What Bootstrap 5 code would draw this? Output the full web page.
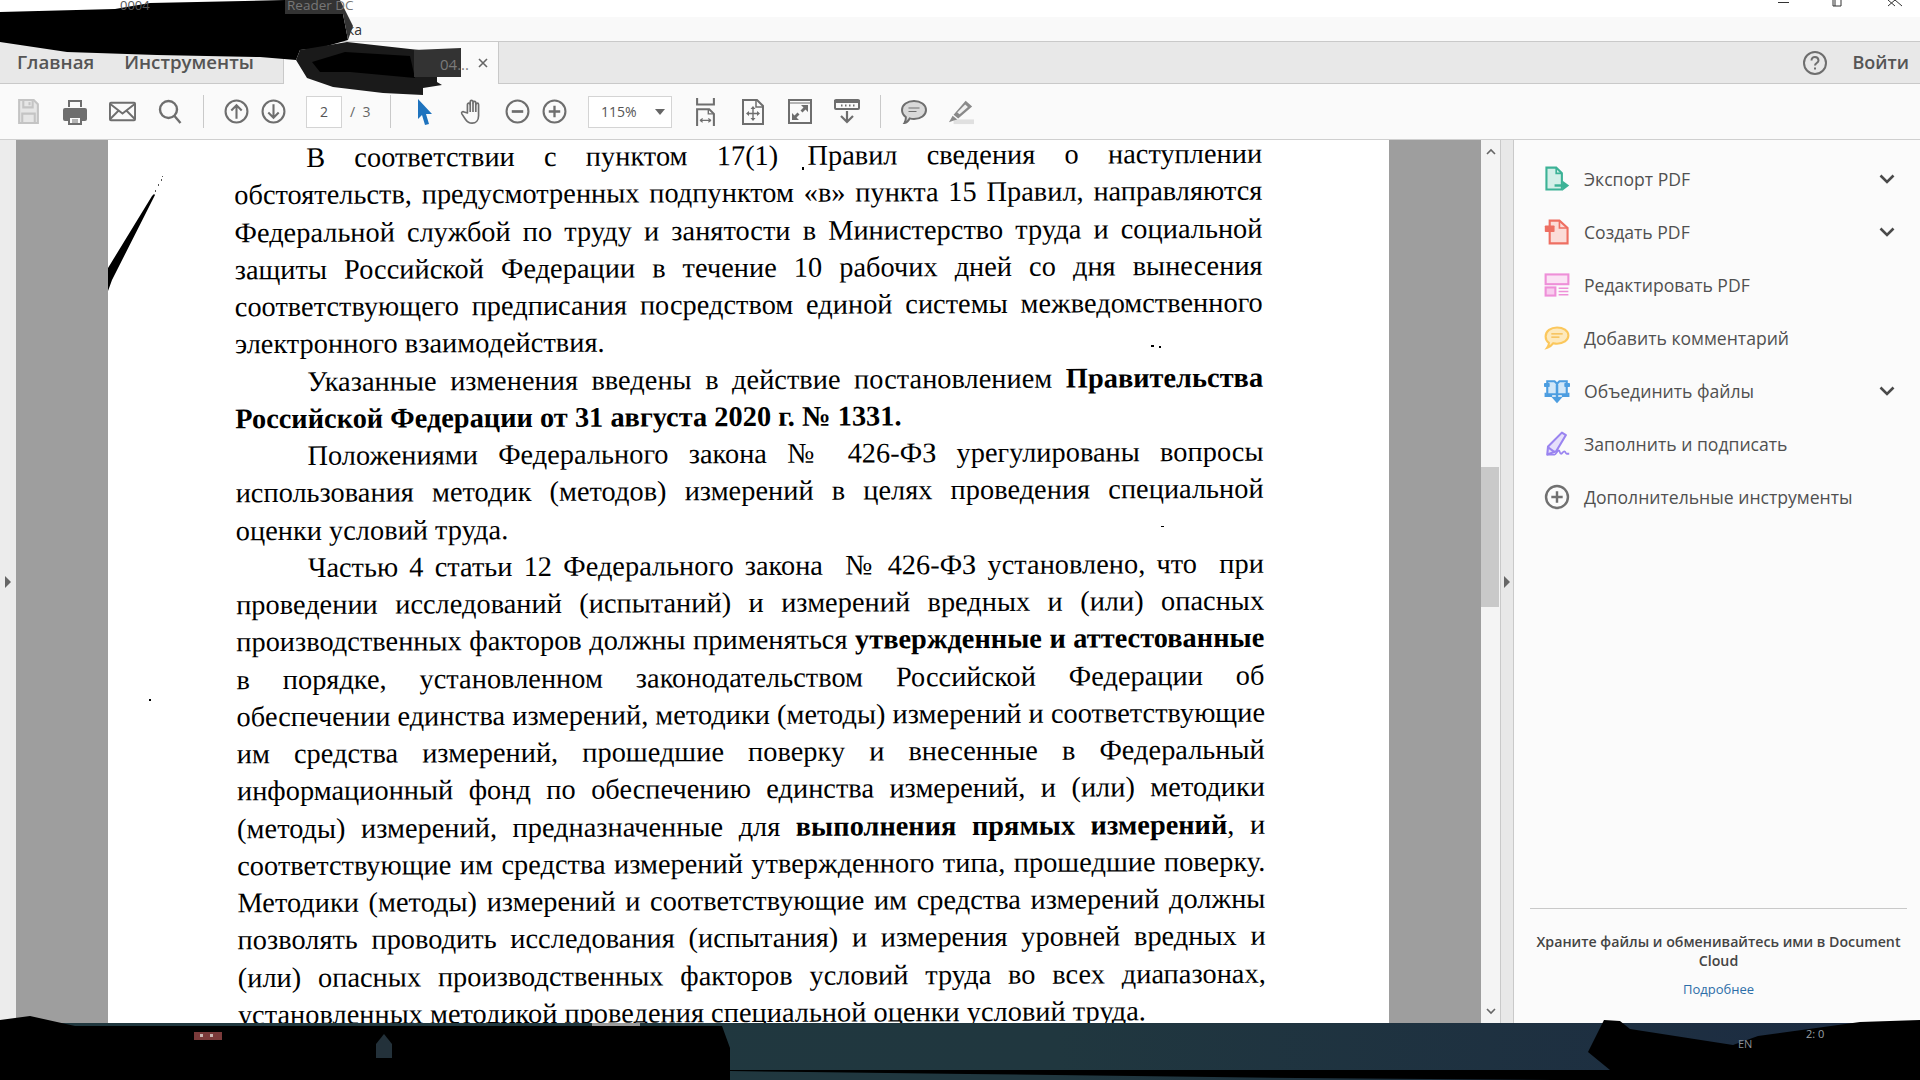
<!DOCTYPE html>
<html lang="ru">
<head>
  <meta charset="UTF-8">
  <title>Adobe Acrobat Reader DC</title>
  <link href="https://cdn.jsdelivr.net/npm/bootstrap@5.3.0/dist/css/bootstrap.min.css" rel="stylesheet">
  <style>
    html, body { height: 100%; }
    body { font-family: "Open Sans", "Liberation Sans", sans-serif; overflow: hidden; background: #fff; }
    .app { height: 1080px; position: relative; overflow: hidden; }
    .title-strip { height: 17px; background: #fff; }
    .win-btns { position: absolute; top: 0; right: 0; }
    .menu-strip { height: 24px; background: #f9f9f9; color: #333; font-size: 14px; line-height: 26px; padding-left: 347px; }
    .tab-row { height: 43px; background: #e8e8e8; border-top: 1px solid #c9c9c9; border-bottom: 1px solid #c9c9c9; color: #4b4b4b; }
    .tab-link { font-size: 18.7px; font-weight: 600; color: #555; }
    .tab-home { margin-left: 17px; }
    .tab-tools { margin-left: 30px; }
    .doc-tab { width: 216px; height: 42px; background: #fafafa; border-right: 1px solid #c9c9c9; border-left: 1px solid #c9c9c9; margin-left: 29px; margin-bottom: -1px; padding-right: 10px; }
    .login-link { font-size: 18px; margin: 0 11px 0 25px; }
    .tool-row { height: 56px; background: #fafafa; border-bottom: 1px solid #cfcfcf; color: #6e6e6e; }
    .tool-sep { width: 1px; height: 33px; background: #c9c9c9; flex: none; }
    .tool-row svg { flex: none; }
    .page-box { width: 36px; height: 32px; background: #fff; border: 1px solid #d4d4d4; font-size: 14px; color: #555; flex: none; }
    .zoom-box { width: 84px; height: 32px; background: #fff; border: 1px solid #d4d4d4; font-size: 14px; color: #555; padding: 0 6px 0 12px; flex: none; }
    .page-of { font-size: 14px; color: #666; width: 19px; white-space: nowrap; flex: none; }
    .m8 { margin-left: 8px; } .m12 { margin-left: 12px; } .m17 { margin-left: 17px; } .m19 { margin-left: 19px; }
    .m20 { margin-left: 20px; } .m21 { margin-left: 21px; } .m22 { margin-left: 22px; } .m23 { margin-left: 23px; }
    .m24 { margin-left: 24px; } .m26 { margin-left: 26px; } .m27 { margin-left: 27px; }
    .main-row { height: 883px; }
    .left-strip { width: 16px; background: #ececec; }
    .doc-view { width: 1465px; background: #9e9e9e; padding: 0 92px; }
    .doc-page { width: 1281px; height: 100%; background: #fff; position: relative; overflow: hidden; }
    .doc-text { padding: 0 125px 0 128px; font-family: "Liberation Serif", serif; font-size: 28.4px; line-height: 37.25px; color: #000; transform: rotate(-0.25deg); transform-origin: 50% 50%; margin-top: -3px; }
    .ln { text-align: justify; text-align-last: justify; white-space: nowrap; }
    .ln.ind { padding-left: 72px; }
    .ln.end { text-align-last: left; }
    .scan-mark { position: absolute; left: 0; top: 0; }
    .v-scroll { width: 19px; background: #f4f4f4; }
    .v-thumb { position: absolute; left: 0; top: 327px; width: 18px; height: 140px; background: #c9c9c9; }
    .mid-strip { width: 14px; background: #e8e8e8; border-left: 1px solid #c9c9c9; border-right: 1px solid #c9c9c9; }
    .side-panel { width: 406px; background: #fbfbfb; padding: 0 13px 0 16px; }
    .side-top { height: 13px; }
    .side-item { height: 52.9px; color: #505050; font-size: 17.6px; padding: 0 12px 0 14px; }
    .side-ico { width: 26px; height: 26px; margin-right: 14px; flex: none; }
    .side-foot { border-top: 1px solid #c9c9c9; text-align: center; font-size: 14.2px; font-weight: 600; line-height: 19px; color: #444; padding-top: 23px; height: 115px; }
    .more-link { display: block; margin-top: 10px; font-size: 13px; font-weight: 400; color: #2d6ea8; text-decoration: none; }
    .task-row { height: 58px; background: linear-gradient(90deg, #20383f, #20373f 55%, #1c2b42); }
    .scribble { position: absolute; left: 0; top: 0; pointer-events: none; font-family: "Open Sans", sans-serif; }
  </style>
</head>
<body>
<div class="app">
  <div class="title-strip">
    <svg class="win-btns" width="160" height="14" viewBox="0 0 160 14" fill="none" stroke="#333" stroke-width="1">
      <path d="M18 2.500h11"/>
      <path d="M73 0v6h8V0M75 6V0"/>
      <path d="M128 0l7 6M135 0l-7 6M135 0l7 6"/>
    </svg>
  </div>
  <div class="menu-strip">ка</div>

  <div class="tab-row d-flex align-items-center">
    <span class="tab-link tab-home">Главная</span>
    <span class="tab-link tab-tools">Инструменты</span>
    <div class="doc-tab d-flex align-items-center justify-content-end align-self-start">
      <svg width="10" height="10" viewBox="0 0 10 10" stroke="#666" stroke-width="1.600"><path d="M1 1l8 8M9 1l-8 8"/></svg>
    </div>
    <div class="ms-auto d-flex align-items-center">
      <svg width="26" height="26" viewBox="0 0 26 26" fill="none" stroke="#6e6e6e" stroke-width="2">
        <circle cx="13" cy="13" r="11"/>
        <path d="M9.500 10.500c0-5 7-4.500 7 0 0 2.500-3.500 2.500-3.500 5"/>
        <path d="M13 17.500v2"/>
      </svg>
      <span class="tab-link login-link">Войти</span>
    </div>
  </div>

  <div class="tool-row d-flex align-items-center">
    <svg class="m17" width="23" height="25" viewBox="0 0 20 24" fill="#e6e6e6" stroke="#c4c4c4" stroke-width="2"><path d="M1 1h14l4 4v18H1z"/><path fill="none" d="M5 1v7h9V1M4 23v-9h12v9"/><path d="M11 3v3"/></svg>
    <svg class="m22" width="26" height="26" viewBox="0 0 24 26"><path fill="#6e6e6e" d="M5 1h14v7H5zM2 9h20a2 2 0 0 1 2 2v9a2 2 0 0 1-2 2h-3v-5H5v5H2a2 2 0 0 1-2-2v-9a2 2 0 0 1 2-2z"/><path fill="none" stroke="#6e6e6e" stroke-width="2" d="M6 18h12v7H6z"/><path stroke="#6e6e6e" d="M9 21h6M9 23h6"/><path fill="#fafafa" d="M7 3h10v5H7z"/></svg>
    <svg class="m21" width="27" height="21" viewBox="0 0 28 20" fill="none" stroke="#6e6e6e" stroke-width="2"><rect x="1" y="1" width="26" height="18" rx="1"/><path d="M1 2l13 10L27 2M1 18l9-9M27 18l-9-9"/></svg>
    <svg class="m22" width="24" height="26" viewBox="0 0 24 26" fill="none" stroke="#6e6e6e" stroke-width="2.400"><circle cx="10.500" cy="10.500" r="8.500"/><path d="M16.500 17l6 7"/></svg>
    <div class="tool-sep m21"></div>
    <svg class="m20" width="25" height="25" viewBox="0 0 24 24" fill="none" stroke="#6e6e6e" stroke-width="2"><circle cx="12" cy="12" r="10.500"/><path d="M12 19V6M7 11l5-5 5 5"/></svg>
    <svg class="m12" width="25" height="25" viewBox="0 0 24 24" fill="none" stroke="#6e6e6e" stroke-width="2"><circle cx="12" cy="12" r="10.500"/><path d="M12 5v13M7 13l5 5 5-5"/></svg>
    <div class="page-box d-flex align-items-center justify-content-center m20">2</div>
    <span class="page-of m8">/&nbsp;&nbsp;3</span>
    <div class="tool-sep m21"></div>
    <svg class="m26" width="16" height="28" viewBox="0 0 16 26"><path fill="#1e73be" d="M1 0l14 15-6 0 3 10-4 1-3-10-4 4z"/></svg>
    <svg class="m27" width="26" height="30" viewBox="0 0 28 28" fill="none" stroke="#6e6e6e" stroke-width="1.800" stroke-linejoin="round"><path d="M8 15V6a1.500 1.500 0 0 1 3 0V3a1.500 1.500 0 0 1 3 0v1a1.500 1.500 0 0 1 3 0v2a1.500 1.500 0 0 1 3 0v12c0 5-3 8-7 8-3 0-5-1-7-4l-4-6c-1-2 1-3 2.500-2z"/><path d="M11 5v9M14 4v10M17 5v9"/></svg>
    <svg class="m19" width="25" height="25" viewBox="0 0 24 24" fill="none" stroke="#6e6e6e" stroke-width="2"><circle cx="12" cy="12" r="10.500"/><path d="M6.500 12h11" stroke-width="2.600"/></svg>
    <svg class="m12" width="25" height="25" viewBox="0 0 24 24" fill="none" stroke="#6e6e6e" stroke-width="2"><circle cx="12" cy="12" r="10.500"/><path d="M6.500 12h11M12 6.500v11" stroke-width="2.200"/></svg>
    <div class="zoom-box d-flex align-items-center justify-content-between m21"><span>115%</span><svg width="10" height="6" viewBox="0 0 10 6"><path fill="#666" d="M0 0h10L5 6z"/></svg></div>
    <svg class="m23" width="21" height="28" viewBox="0 0 22 30" fill="none" stroke="#6e6e6e" stroke-width="2.200"><path d="M2 0v7h18V0"/><path d="M2 30V12h13l5 5v13"/><path d="M14 12v5h6" stroke-width="1.500"/><path d="M5 24h12M5 24l3-2M5 24l3 2M17 24l-3-2M17 24l-3 2" stroke-width="1.200"/></svg>
    <svg class="m26" width="22" height="26" viewBox="0 0 22 26" fill="none" stroke="#6e6e6e" stroke-width="2"><path d="M1 1h14l6 6v18H1z"/><path d="M14 1v7h7" stroke-width="1.500"/><path d="M11 9v11M6 14.500h10" stroke-width="1.400"/><path fill="#6e6e6e" stroke="none" d="M11 7l2.500 3h-5zM11 22l2.500-3h-5zM4 14.500l3-2.500v5zM18 14.500l-3-2.500v5z"/></svg>
    <svg class="m24" width="24" height="25" viewBox="0 0 24 25" fill="none" stroke="#6e6e6e" stroke-width="2"><rect x="1" y="1" width="22" height="23"/><path d="M1 4h22" stroke-width="1"/><path fill="#6e6e6e" stroke="none" d="M20 6v7l-2.500-2.500-3 3-2-2 3-3L13 6zM4 21v-7l2.500 2.500 3-3 2 2-3 3L11 21z"/></svg>
    <svg class="m22" width="26" height="25" viewBox="0 0 26 25"><rect x="1" y="1" width="24" height="9" rx="1" fill="none" stroke="#6e6e6e" stroke-width="2"/><path fill="#6e6e6e" d="M0 1h26v3H0z"/><path d="M7 6.500h1.500M11 6.500h1.500M15 6.500h1.500M19 6.500h1.500" stroke="#6e6e6e" stroke-width="2"/><path d="M13 12v11M7 17l6 6 6-6" fill="none" stroke="#6e6e6e" stroke-width="2.200"/></svg>
    <div class="tool-sep m20"></div>
    <svg class="m20" width="26" height="24" viewBox="0 0 26 24"><path fill="#d9d9d9" stroke="#6e6e6e" stroke-width="2" d="M13 1c6.600 0 12 3.800 12 9s-5.400 9-12 9c-1.500 0-3-.2-4.300-.6C7.500 20.500 5.500 22.500 3.500 23c1-1.500 1.500-3.500 1.300-6C2.500 15.300 1 12.800 1 10c0-5.200 5.400-9 12-9z"/><path d="M7.500 8h11M7.500 11.500h8" stroke="#6e6e6e" stroke-width="1.200"/></svg>
    <svg class="m21" width="26" height="26" viewBox="0 0 28 26"><path fill="#e0e0e0" d="M6 21h22v5H6z"/><path fill="#8a8a8a" d="M19 1l7 6L11 20l-5-4zM5 17l5 4-3 1-6 2z"/><path fill="#f0f0f0" d="M18.500 5l3 2.500-9 8-2.500-2z"/></svg>
  </div>

  <div class="main-row d-flex">
    <div class="left-strip d-flex align-items-center justify-content-center">
      <svg width="8" height="12" viewBox="0 0 8 12"><path fill="#666" d="M1 0l6 6-6 6z"/></svg>
    </div>
    <div class="doc-view">
      <div class="doc-page">
        <svg class="scan-mark" width="1281" height="883" viewBox="0 0 1281 883">
          <path fill="#000" d="M0 128L44 56 46 54 47 55 4 140 0 151z"/>
          <path fill="#555" d="M47 50h1v2h-1zM50 44h1v2h-1zM53 39h1v2h-1zM54 36h1v1h-1z"/>
          <path fill="#000" d="M1043 205h3v2h-3zM1051 206h2v2h-2zM1053 386h3v1h-3zM41 559h2v2h-2zM694 27h2v3h-2z"/>
        </svg>
        <div class="doc-text">
          <div class="ln ind">В соответствии с пунктом 17(1) Правил сведения о наступлении</div>
          <div class="ln">обстоятельств, предусмотренных подпунктом «в» пункта 15 Правил, направляются</div>
          <div class="ln">Федеральной службой по труду и занятости в Министерство труда и социальной</div>
          <div class="ln">защиты Российской Федерации в течение 10 рабочих дней со дня вынесения</div>
          <div class="ln">соответствующего предписания посредством единой системы межведомственного</div>
          <div class="ln end">электронного взаимодействия.</div>
          <div class="ln ind">Указанные изменения введены в действие постановлением <b>Правительства</b></div>
          <div class="ln end"><b>Российской Федерации от 31 августа 2020 г. № 1331.</b></div>
          <div class="ln ind">Положениями Федерального закона № 426-ФЗ урегулированы вопросы</div>
          <div class="ln">использования методик (методов) измерений в целях проведения специальной</div>
          <div class="ln end">оценки условий труда.</div>
          <div class="ln ind">Частью 4 статьи 12 Федерального закона &nbsp;№ 426-ФЗ установлено, что &nbsp;при</div>
          <div class="ln">проведении исследований (испытаний) и измерений вредных и (или) опасных</div>
          <div class="ln">производственных факторов должны применяться <b>утвержденные и аттестованные</b></div>
          <div class="ln">в порядке, установленном законодательством Российской Федерации об</div>
          <div class="ln">обеспечении единства измерений, методики (методы) измерений и соответствующие</div>
          <div class="ln">им средства измерений, прошедшие поверку и внесенные в Федеральный</div>
          <div class="ln">информационный фонд по обеспечению единства измерений, и (или) методики</div>
          <div class="ln">(методы) измерений, предназначенные для <b>выполнения прямых измерений</b>, и</div>
          <div class="ln">соответствующие им средства измерений утвержденного типа, прошедшие поверку.</div>
          <div class="ln">Методики (методы) измерений и соответствующие им средства измерений должны</div>
          <div class="ln">позволять проводить исследования (испытания) и измерения уровней вредных и</div>
          <div class="ln">(или) опасных производственных факторов условий труда во всех диапазонах,</div>
          <div class="ln end">установленных методикой проведения специальной оценки условий труда.</div>
        </div>
      </div>
    </div>
    <div class="v-scroll position-relative d-flex flex-column justify-content-between align-items-center py-2">
      <svg width="10" height="7" viewBox="0 0 10 7" fill="none" stroke="#666" stroke-width="1.600"><path d="M1 6l4-4 4 4"/></svg>
      <div class="v-thumb"></div>
      <svg width="10" height="7" viewBox="0 0 10 7" fill="none" stroke="#666" stroke-width="1.600"><path d="M1 1l4 4 4-4"/></svg>
    </div>
    <div class="mid-strip d-flex align-items-center justify-content-center">
      <svg width="8" height="12" viewBox="0 0 8 12"><path fill="#666" d="M1 0l6 6-6 6z"/></svg>
    </div>
    <div class="side-panel d-flex flex-column">
      <div class="side-top"></div>
      <div class="side-item d-flex align-items-center">
        <svg class="side-ico" viewBox="0 0 32 32" fill="none" stroke="#3cb296" stroke-width="2.600"><path fill="#d4efe8" d="M3 2h12l7 7v20H3z"/><path d="M15 2v7h7" stroke-width="2"/><path d="M13 24h12" stroke-width="3"/><path fill="#3cb296" stroke="none" d="M23 18l8 6-8 6z"/></svg>
        <span class="flex-grow-1">Экспорт PDF</span>
        <svg width="16" height="10" viewBox="0 0 16 10" fill="none" stroke="#4a4a4a" stroke-width="2.600"><path d="M1.500 1.500L8 8l6.500-6.500"/></svg>
      </div>
      <div class="side-item d-flex align-items-center">
        <svg class="side-ico" viewBox="0 0 32 32" fill="none" stroke="#ee6f62" stroke-width="2.600"><path fill="#fbdcd8" d="M7 2h12l10 9v19H7z"/><path d="M19 2v9h10" stroke-width="2"/><rect x="1" y="8" width="12" height="8" rx="1" fill="#ee6f62" stroke="none"/></svg>
        <span class="flex-grow-1">Создать PDF</span>
        <svg width="16" height="10" viewBox="0 0 16 10" fill="none" stroke="#4a4a4a" stroke-width="2.600"><path d="M1.500 1.500L8 8l6.500-6.500"/></svg>
      </div>
      <div class="side-item d-flex align-items-center">
        <svg class="side-ico" viewBox="0 0 32 32" fill="none" stroke="#ee8fd8" stroke-width="2.600"><rect x="2" y="3" width="28" height="12" fill="#fbe3f5"/><rect x="2" y="19" width="12" height="10" fill="#f8cdee"/><path d="M18 20h12M18 24h12M18 28h12" stroke-width="1.600"/></svg>
        <span class="flex-grow-1">Редактировать PDF</span>
      </div>
      <div class="side-item d-flex align-items-center">
        <svg class="side-ico" viewBox="0 0 32 32" fill="none" stroke="#fbc75c" stroke-width="2.600"><path fill="#fde9bd" d="M16 3c7.500 0 14 4 14 10s-6.500 10-14 10c-1.500 0-3-.2-4.500-.6C10 24.500 7 27 4 28c1.500-2 2-4 2-6-2.500-2-4-5-4-8 0-6.500 6.500-11 14-11z"/><path d="M9 11h14M9 15h10" stroke="#f5b945" stroke-width="1.400"/></svg>
        <span class="flex-grow-1">Добавить комментарий</span>
      </div>
      <div class="side-item d-flex align-items-center">
        <svg class="side-ico" viewBox="0 0 32 32" fill="none" stroke="#4c9de0" stroke-width="2.600"><path fill="#d2e7f8" d="M4 4h9l3 3v13H4zM16 7l3-3h9v16H16z"/><rect x="0" y="6" width="7" height="5" rx="1" fill="#4c9de0" stroke="none"/><rect x="25" y="6" width="7" height="5" rx="1" fill="#4c9de0" stroke="none"/><path d="M16 8v17" stroke-width="3"/><path fill="#4c9de0" stroke="none" d="M9 23h14l-7 8z"/><path d="M2 18v4h8M30 18v4h-8"/></svg>
        <span class="flex-grow-1">Объединить файлы</span>
        <svg width="16" height="10" viewBox="0 0 16 10" fill="none" stroke="#4a4a4a" stroke-width="2.600"><path d="M1.500 1.500L8 8l6.500-6.500"/></svg>
      </div>
      <div class="side-item d-flex align-items-center">
        <svg class="side-ico" viewBox="0 0 32 32" fill="none" stroke="#9a84f0" stroke-width="2.600" stroke-linejoin="round"><path fill="#e6e0fb" d="M22 2l5 3-12 20-11 4 1-10z"/><path d="M5 20l8 6"/><path d="M4 29h9c2 0 3-5 5-5s1 4 3 4 2-3 4-3 1 3 3 3h3" stroke-width="2.200"/></svg>
        <span class="flex-grow-1">Заполнить и подписать</span>
      </div>
      <div class="side-item d-flex align-items-center">
        <svg class="side-ico" viewBox="0 0 32 32" fill="none" stroke="#707070" stroke-width="3"><circle cx="16" cy="16" r="13.500"/><path d="M9 16h14M16 9v14"/></svg>
        <span class="flex-grow-1">Дополнительные инструменты</span>
      </div>
      <div class="flex-grow-1"></div>
      <div class="side-foot">
        Храните файлы и обменивайтесь ими в Document Cloud
        <a class="more-link" href="#">Подробнее</a>
      </div>
    </div>
  </div>

  <div class="task-row"></div>

  <!-- blacked out parts of the screenshot -->
  <svg class="scribble" width="1920" height="1080" viewBox="0 0 1920 1080">
    <path fill="#000" d="M0 12L115 9 150 3 285 0 285 13 312 13 343 14 348 40 320 48 300 50 296 60 260 57 157 55 67 52 0 42z"/>
    <path fill="#333" d="M285 0L340 0 353 26 348 40 343 14 285 14z"/>
    <path fill="#1a1a1a" d="M296 60L300 50 347 42 437 52 437 82 442 85 423 88 423 95 383 93 333 87 307 78z"/>
    <path fill="#000" d="M312 62L345 52 410 56 415 78 350 72 320 72z"/>
    <path fill="#333" d="M414 50L461 48 461 77 414 77z"/>
    <text x="120" y="10" font-size="13" fill="#555">0004</text>
    <text x="287" y="10" font-size="13.500" fill="#777">Reader DC</text>
    <text x="440" y="70" font-size="15" fill="#7a7a7a">04...</text>

    <path fill="#000" d="M0 1020L30 1016 75 1026 722 1026 730 1048 730 1080 0 1080z"/>
    <path fill="#9b9b9b" d="M592 1023h48v3h-48z"/>
    <path fill="#7a3a3a" d="M194 1032h28v8h-28z"/>
    <path fill="#c9b6b2" d="M200 1034h3v3h-3zM210 1034h3v3h-3z"/>
    <path fill="#23313a" d="M376 1044l8-10 8 10v14h-16z"/>
    <path fill="#000" d="M722 1070L1553 1070 1553 1080 1298 1078 968 1074 808 1072 730 1071z"/>
    <path fill="#000" d="M1588 1052L1604 1020 1620 1021 1630 1029 1733 1045 1758 1036 1860 1022 1920 1020 1920 1080 1553 1080 1553 1070 1610 1070z"/>
    <text x="1738" y="1048" font-size="11" fill="#8a8f96">EN</text>
    <text x="1806" y="1038" font-size="11" fill="#9aa0a8">2: 0</text>
  </svg>
</div>
<script src="https://cdn.jsdelivr.net/npm/bootstrap@5.3.0/dist/js/bootstrap.bundle.min.js"></script>
</body>
</html>
